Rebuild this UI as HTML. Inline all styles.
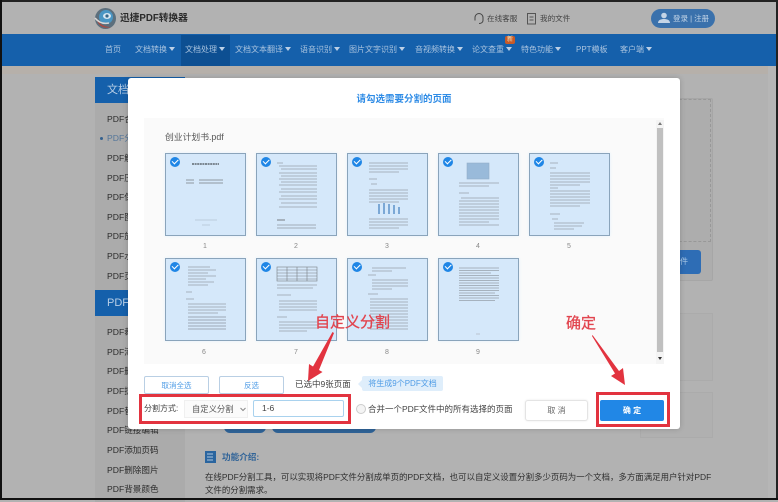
<!DOCTYPE html>
<html lang="zh"><head><meta charset="utf-8"><title>迅捷PDF转换器</title>
<style>
*{box-sizing:border-box}
html,body{margin:0;padding:0}
body{width:778px;height:500px;overflow:hidden;position:relative;background:#b2b2b2;font-family:"Liberation Sans","Noto Sans CJK SC",sans-serif;color:#333}
.a{position:absolute;white-space:nowrap}
.nav{font-size:8px;color:#a9c3df;top:45px;line-height:10px}
.nav i{display:inline-block;width:0;height:0;border:3.5px solid transparent;border-top:4px solid #bcd0e6;border-bottom:0;margin-left:2px;vertical-align:1px}
.side{left:107px;font-size:8.6px;line-height:12px;color:#2c2c2c;width:70px}
.thumb{position:absolute;width:81px;height:83px;background:#d5e8fa;border:1px solid #8aa4bb;box-shadow:0 0 3px #e4f2fd}
.thumb svg{position:absolute;left:0;top:0;opacity:.72}
.ck{position:absolute;left:4px;top:3px;width:10px;height:10px;border-radius:50%;background:#1f86e6}
.ck:after{content:"";position:absolute;left:2.4px;top:2.2px;width:5px;height:2.6px;border-left:1.3px solid #fff;border-bottom:1.3px solid #fff;transform:rotate(-45deg)}
.num{font-size:7px;color:#888;line-height:8px;width:20px;text-align:center}
.btn{height:18px;border:1px solid #b9cfe4;border-radius:2px;background:#fff;color:#4f9ce6;font-size:7.5px;text-align:center;line-height:17px}
.ann{font-size:15px;line-height:18px;color:#e2444e;-webkit-text-stroke:.3px #e2444e}
</style></head><body>

<!-- header -->
<svg class="a" style="left:94px;top:7px" width="23" height="23" viewBox="0 0 23 23"><circle cx="11.5" cy="11.5" r="10.5" fill="#5c6f7d"/><circle cx="12" cy="10" r="7" fill="#4a96c4"/><ellipse cx="13" cy="9" rx="4" ry="3" fill="#d8e8f2"/><circle cx="13" cy="9" r="1.6" fill="#37688a"/><path d="M2 9C3 15 8 20 17 20 11 22 3 20 2 9Z" fill="#a84a42"/><path d="M1 11C5 16 10 17 15 16" stroke="#d7d7d7" stroke-width="1.5" fill="none"/></svg>
<div class="a" style="left:120px;top:12px;font-size:9.7px;line-height:13px;font-weight:bold;color:#2b2b2b">迅捷PDF转换器</div>
<svg class="a" style="left:473px;top:12px" width="12" height="13" viewBox="0 0 12 13" fill="none" stroke="#444" stroke-width="1"><path d="M2 7V5.500a4 4 0 0 1 8 0V7M2 5.500v3M10 5.500v3c0 2-2 3-4 3"/></svg>
<div class="a" style="left:487px;top:14px;font-size:7.6px;line-height:10px;color:#444">在线客服</div>
<svg class="a" style="left:527px;top:13px" width="10" height="12" viewBox="0 0 10 12" fill="none" stroke="#555" stroke-width="1"><rect x=".5" y=".5" width="8" height="10.500"/><path d="M2.500 4h4M2.500 7h4"/></svg>
<div class="a" style="left:540px;top:14px;font-size:7.6px;line-height:10px;color:#444">我的文件</div>
<div class="a" style="left:651px;top:9px;width:64px;height:19px;border-radius:10px;background:#3a71ac"></div>
<svg class="a" style="left:658px;top:12px" width="12" height="12" viewBox="0 0 12 12" fill="#c4d4e6"><circle cx="6" cy="3.500" r="2.800"/><path d="M0 11c0-3 3-4 6-4s6 1 6 4z"/></svg>
<div class="a" style="left:673px;top:14px;font-size:7.5px;line-height:10px;color:#c5d6e8">登录 | 注册</div>

<!-- nav -->
<div class="a" style="left:0;top:34px;width:778px;height:32px;background:#1560ab"></div>
<div class="a" style="left:181px;top:35px;width:49px;height:31px;background:#0d4f92"></div>
<div class="a nav" style="left:105px">首页</div>
<div class="a nav" style="left:135px">文档转换<i></i></div>
<div class="a nav" style="left:185px">文档处理<i></i></div>
<div class="a nav" style="left:235px">文档文本翻译<i></i></div>
<div class="a nav" style="left:300px">语音识别<i></i></div>
<div class="a nav" style="left:349px">图片文字识别<i></i></div>
<div class="a nav" style="left:415px">音视频转换<i></i></div>
<div class="a nav" style="left:472px">论文查重<i></i></div>
<div class="a nav" style="left:521px">特色功能<i></i></div>
<div class="a nav" style="left:576px">PPT模板</div>
<div class="a nav" style="left:620px">客户端<i></i></div>
<div class="a" style="left:505px;top:36px;width:10px;height:8px;background:#c85a28;border-radius:2px;color:#eec;font-size:6px;line-height:8px;text-align:center">新</div>
<div class="a" style="left:0;top:66px;width:778px;height:8px;background:#b6b0aa"></div>

<!-- sidebar -->
<div class="a" style="left:95px;top:77px;width:90px;height:425px;background:#ababab"></div>
<div class="a" style="left:95px;top:77px;width:90px;height:26px;background:#1560ab;color:#b8cee6;font-size:11px;line-height:26px;padding-left:12px">文档处理</div>
<div class="a side" style="top:113px">PDF合并</div>
<div class="a" style="left:100px;top:137px;width:3px;height:3px;border-radius:50%;background:#34618e"></div>
<div class="a side" style="top:132px;color:#54769a">PDF分割</div>
<div class="a side" style="top:152px">PDF解密</div>
<div class="a side" style="top:172px">PDF压缩</div>
<div class="a side" style="top:191px">PDF保护</div>
<div class="a side" style="top:211px">PDF图片</div>
<div class="a side" style="top:230px">PDF旋转</div>
<div class="a side" style="top:250px">PDF水印</div>
<div class="a side" style="top:270px">PDF页面</div>
<div class="a" style="left:95px;top:290px;width:90px;height:26px;background:#1560ab;color:#b8cee6;font-size:11px;line-height:26px;padding-left:12px">PDF页面</div>
<div class="a side" style="top:326px">PDF裁剪</div>
<div class="a side" style="top:346px">PDF添加</div>
<div class="a side" style="top:365px">PDF删除</div>
<div class="a side" style="top:385px">PDF提取</div>
<div class="a side" style="top:405px">PDF替换</div>
<div class="a side" style="top:424px">PDF链接编辑</div>
<div class="a side" style="top:444px">PDF添加页码</div>
<div class="a side" style="top:464px">PDF删除图片</div>
<div class="a side" style="top:483px">PDF背景颜色</div>

<!-- behind modal right -->
<div class="a" style="left:640px;top:98px;width:73px;height:183px;background:#adadad;border:1px solid #a6a6a6;border-radius:2px"></div>
<div class="a" style="left:640px;top:99px;width:71px;height:143px;border:1px dashed #989898"></div>
<div class="a" style="left:650px;top:250px;width:51px;height:24px;background:#2e6db5;border-radius:3px;color:#a9c8e6;font-size:8px;line-height:24px;padding-left:30px">件</div>
<div class="a" style="left:640px;top:313px;width:73px;height:68px;background:#b0b0b0;border:1px solid #ababab"></div>
<div class="a" style="left:640px;top:392px;width:73px;height:46px;background:#b0b0b0;border:1px solid #ababab"></div>
<div class="a" style="left:768px;top:66px;width:8px;height:434px;background:#b6b6b6"></div>
<div class="a" style="left:224px;top:420px;width:42px;height:13px;background:#2f6398;border-radius:6px"></div>
<div class="a" style="left:272px;top:420px;width:104px;height:13px;background:#2f6398;border-radius:6px"></div>

<!-- intro -->
<svg class="a" style="left:205px;top:451px" width="12" height="12" viewBox="0 0 12 12"><rect width="11" height="12" fill="#2a659f"/><path d="M2 3h6M2 6h6M2 9h6" stroke="#b0c8df" stroke-width="1"/></svg>
<div class="a" style="left:222px;top:451px;font-size:8.6px;line-height:12px;font-weight:bold;color:#2f6398">功能介绍:</div>
<div class="a" style="left:205px;top:472px;font-size:8.45px;line-height:11px;color:#2f2f2f">在线PDF分割工具，可以实现将PDF文件分割成单页的PDF文档，也可以自定义设置分割多少页码为一个文档，多方面满足用户针对PDF</div>
<div class="a" style="left:205px;top:485px;font-size:8.45px;line-height:11px;color:#2f2f2f">文件的分割需求。</div>

<!-- modal -->
<div class="a" style="left:128px;top:78px;width:552px;height:351px;background:#fff;border-radius:3px;box-shadow:0 0 6px rgba(0,0,0,.18)"></div>
<div class="a" style="left:128px;top:94px;width:552px;text-align:center;font-size:9.5px;line-height:12px;font-weight:bold;color:#2f8ce6">请勾选需要分割的页面</div>
<div class="a" style="left:144px;top:118px;width:520px;height:246px;background:#fafafa"></div>
<div class="a" style="left:165px;top:131px;font-size:8.8px;line-height:13px;color:#555">创业计划书.pdf</div>

<!-- scrollbar -->
<div class="a" style="left:656px;top:120px;width:8px;height:244px;background:#f4f4f4"></div>
<div class="a" style="left:657px;top:128px;width:6px;height:224px;background:#c0c0c0"></div>
<div class="a" style="left:658px;top:122px;width:0;height:0;border:2px solid transparent;border-bottom:3px solid #777;border-top:0"></div>
<div class="a" style="left:658px;top:357px;width:0;height:0;border:2px solid transparent;border-top:3px solid #333;border-bottom:0"></div>

<!-- thumbs row 1 -->
<div class="thumb" style="left:165px;top:153px"><svg width="79" height="81" fill="none" stroke="#33363a"><path d="M26 10h27" stroke-width="1.500" stroke-dasharray="2 .6"/><path d="M20 26h8M33 26h24M20 29h8M33 29h24" stroke-width=".7" stroke="#555"/><path d="M29 66h22M36 71h8" stroke-width=".6" stroke="#8c9aa6"/></svg><div class="ck"></div></div>
<div class="thumb" style="left:256px;top:153px"><svg width="79" height="81" fill="none" stroke="#555" stroke-width=".6"><path d="M20 9h6M22 12h38M24 15h36M22 19h38M24 22h36M22 25h38M24 28h36M22 31h38M24 35h36M22 38h38M24 42h36M22 45h38M24 49h36M22 53h38"/><path d="M20 66h8" stroke-width="1"/><path d="M20 71h39M20 74h39" stroke="#444"/></svg><div class="ck"></div></div>
<div class="thumb" style="left:347px;top:153px"><svg width="79" height="81" fill="none" stroke="#555" stroke-width=".6"><path d="M21 9h39M21 12h39M21 15h39M21 18h30M21 25h8M23 30h6M21 36h39M21 39h39M21 42h39M21 45h39M21 48h30M21 65h39M21 68h39M21 71h39M21 74h30"/><path d="M31 60v-10M36 60v-11M41 60v-10M46 60v-9M51 60v-7" stroke="#4b87c2" stroke-width="1.800"/></svg><div class="ck"></div></div>
<div class="thumb" style="left:438px;top:153px"><svg width="79" height="81" fill="none" stroke="#555" stroke-width=".6"><rect x="28" y="9" width="22" height="16" fill="#82a9ce" stroke="#7b9ab6"/><path d="M20 29h40M20 32h30M20 39h10M22 44h38M20 47h40M20 50h40M20 53h40M20 56h40M20 59h40M20 62h40M20 65h40M20 68h30M20 71h40"/></svg><div class="ck"></div></div>
<div class="thumb" style="left:529px;top:153px"><svg width="79" height="81" fill="none" stroke="#555" stroke-width=".6"><path d="M20 9h8M20 14h6M20 19h40M20 22h40M20 25h40M20 28h40M20 31h30M20 34h8M20 37h40M20 40h40M20 43h40M20 46h40M20 49h40M20 52h30M20 60h10M22 65h6M24 69h30M24 72h28M24 75h20"/></svg><div class="ck"></div></div>
<div class="num a" style="left:195px;top:243px">1</div>
<div class="num a" style="left:286px;top:243px">2</div>
<div class="num a" style="left:377px;top:243px">3</div>
<div class="num a" style="left:468px;top:243px">4</div>
<div class="num a" style="left:559px;top:243px">5</div>

<!-- thumbs row 2 -->
<div class="thumb" style="left:165px;top:258px"><svg width="79" height="81" fill="none" stroke="#555" stroke-width=".6"><path d="M22 8h22M22 11h28M22 14h20M22 17h28M22 20h18M22 23h26M22 26h20M20 33h6M20 40h8M22 45h38M22 48h38M22 51h38M22 54h30"/><path d="M22 58h38M22 61h38M22 64h38M22 67h38M22 70h38" stroke="#3a3a3a"/></svg><div class="ck"></div></div>
<div class="thumb" style="left:256px;top:258px"><svg width="79" height="81" fill="none" stroke="#555" stroke-width=".6"><rect x="20" y="8" width="40" height="14" fill="none"/><path d="M20 11h40M20 14h40M20 17h40M20 20h40M30 8v14M40 8v14M50 8v14"/><path d="M20 26h40M20 29h36M20 36h14M22 42h38M22 45h38M22 48h38M22 51h38M20 58h10M22 63h38M22 66h38M22 69h38M22 72h28"/></svg><div class="ck"></div></div>
<div class="thumb" style="left:347px;top:258px"><svg width="79" height="81" fill="none" stroke="#555" stroke-width=".6"><path d="M24 9h34M24 12h20M20 16h8M24 21h36M24 24h36M24 27h36M24 30h20M20 35h10M22 40h38M22 43h38M22 46h38M22 49h38M22 52h38M22 55h38M22 58h38M22 61h38M22 64h38M22 67h38M22 70h38"/></svg><div class="ck"></div></div>
<div class="thumb" style="left:438px;top:258px"><svg width="79" height="81" fill="none" stroke="#555" stroke-width=".6"><path d="M20 9h40M20 11.500h40M20 14h32M20 16.500h40M20 19h40M20 21.500h40M20 24h40M20 26.500h40M20 29h40M20 31.500h40M20 34h36M20 36.500h40M20 39h40M20 41.500h36"/><path d="M37 75h4" stroke="#999"/></svg><div class="ck"></div></div>
<div class="num a" style="left:194px;top:349px">6</div>
<div class="num a" style="left:286px;top:349px">7</div>
<div class="num a" style="left:377px;top:349px">8</div>
<div class="num a" style="left:468px;top:349px">9</div>

<!-- action row -->
<div class="a btn" style="left:144px;top:376px;width:65px">取消全选</div>
<div class="a btn" style="left:219px;top:376px;width:65px">反选</div>
<div class="a" style="left:295px;top:378px;font-size:8.5px;line-height:12px;color:#444">已选中9张页面</div>
<div class="a" style="left:358px;top:380px;width:0;height:0;border:4px solid transparent;border-right:4px solid #dfeefb;border-left:0"></div>
<div class="a" style="left:362px;top:376px;width:81px;height:15px;background:#dfeefb;color:#4f9ce6;font-size:8px;line-height:15px;text-align:center;border-radius:2px">将生成9个PDF文档</div>

<div class="a" style="left:144px;top:403px;font-size:8px;line-height:12px;color:#444">分割方式:</div>
<div class="a" style="left:184px;top:400px;width:64px;height:18px;background:#fbfbfb;border:1px solid #f0f0f0;font-size:8.3px;line-height:17px;color:#555;padding-left:7px">自定义分割</div>
<svg class="a" style="left:240px;top:407px" width="6" height="5" fill="none" stroke="#888"><path d="M.5 1L3 3.500 5.500 1"/></svg>
<div class="a" style="left:253px;top:400px;width:91px;height:17px;background:#fff;border:1px solid #a9d2ee;border-radius:2px;font-size:8.500px;line-height:15px;color:#444;padding-left:8px">1-6</div>
<div class="a" style="left:139px;top:394px;width:212px;height:30px;border:3px solid #e2333f"></div>
<div class="a" style="left:356px;top:404px;width:10px;height:10px;border-radius:50%;border:1px solid #ccc;background:#f4f4f4"></div>
<div class="a" style="left:368px;top:403px;font-size:8.500px;line-height:12px;color:#444">合并一个PDF文件中的所有选择的页面</div>
<div class="a" style="left:525px;top:400px;width:63px;height:21px;border:1px solid #e4e4e4;border-radius:3px;box-shadow:0 0 2px #e8e8e8;font-size:8px;line-height:20px;text-align:center;color:#666;background:#fff">取 消</div>
<div class="a" style="left:600px;top:400px;width:64px;height:21px;background:#2187e6;border-radius:2px;font-size:8px;font-weight:bold;line-height:21px;text-align:center;color:#fff">确 定</div>
<div class="a" style="left:596px;top:392px;width:74px;height:35px;border:3px solid #e2333f"></div>

<!-- annotations -->
<div class="a ann" style="left:315px;top:314px">自定义分割</div>
<div class="a ann" style="left:566px;top:315px">确定</div>
<svg class="a" style="left:0;top:0" width="778" height="500" fill="#e2333f"><path d="M334 333L319 370 322.500 372 308 381 309 364 313 366.500 332.500 332Z"/><path d="M592.500 335L619 371 623 368 625 385 611 376 615 373.500 592 336Z"/></svg>

<!-- outer frame -->
<div class="a" style="left:0;top:0;width:778px;height:1.500px;background:#222"></div>
<div class="a" style="left:0;top:0;width:2px;height:500px;background:#111"></div>
<div class="a" style="left:776px;top:0;width:2px;height:500px;background:#222"></div>
<div class="a" style="left:0;top:498px;width:778px;height:2px;background:#111"></div>
</body></html>
